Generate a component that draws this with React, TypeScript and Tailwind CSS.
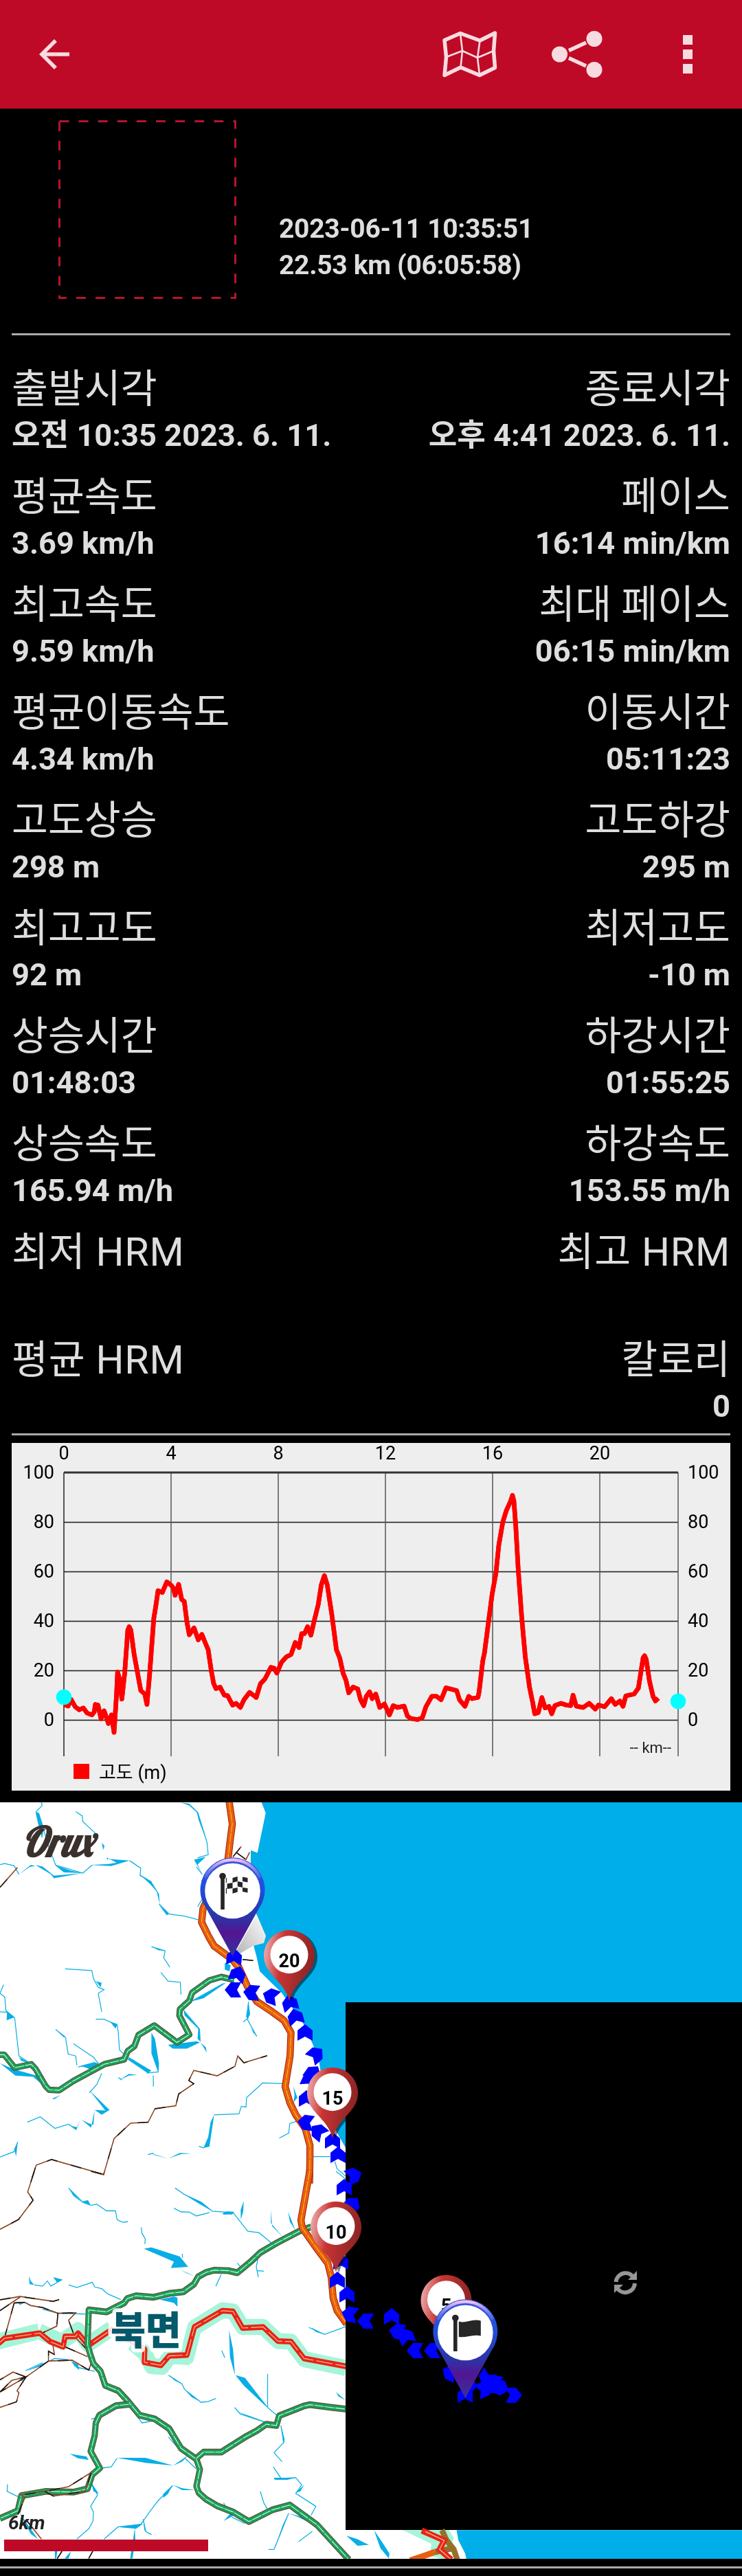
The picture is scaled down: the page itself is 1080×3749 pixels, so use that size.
interface Stat {
    label: string;
    value: string;
}

const rows: [Stat, Stat][] = [
    [{ label: '출발시각', value: '오전 10:35 2023. 6. 11.' }, { label: '종료시각', value: '오후 4:41 2023. 6. 11.' }],
    [{ label: '평균속도', value: '3.69 km/h' }, { label: '페이스', value: '16:14 min/km' }],
    [{ label: '최고속도', value: '9.59 km/h' }, { label: '최대 페이스', value: '06:15 min/km' }],
    [{ label: '평균이동속도', value: '4.34 km/h' }, { label: '이동시간', value: '05:11:23' }],
    [{ label: '고도상승', value: '298 m' }, { label: '고도하강', value: '295 m' }],
    [{ label: '최고고도', value: '92 m' }, { label: '최저고도', value: '-10 m' }],
    [{ label: '상승시간', value: '01:48:03' }, { label: '하강시간', value: '01:55:25' }],
    [{ label: '상승속도', value: '165.94 m/h' }, { label: '하강속도', value: '153.55 m/h' }],
    [{ label: '최저 HRM', value: '' }, { label: '최고 HRM', value: '' }],
    [{ label: '평균 HRM', value: '' }, { label: '칼로리', value: '0' }],
];

const Header = () => (
    <header className="h-[158px] bg-[#be0a26] flex items-center justify-between pl-[46px] pr-[72px] text-[#f8dbe0]">
        <svg width="66" height="66" viewBox="0 0 24 24" fill="currentColor"><path d="M20 11H7.83l5.59-5.59L12 4l-8 8 8 8 1.41-1.41L7.83 13H20v-2z" /></svg>
        <div className="flex items-center">
            <svg width="80" height="70" viewBox="15 13 80 70" fill="none" stroke="currentColor" strokeLinejoin="round">
                <path d="M18 27.500L41 17.500 69.500 28 91.500 17 89.500 43 91.500 67.500 69 78.500 41.500 67 18 78.500 20.500 52Z" strokeWidth="5.500" />
                <path d="M41 18L44 43 41.500 67M69.500 28L66 53 69 78M20.500 52L44 43 66 53 89.500 43" strokeWidth="2.600" />
            </svg>
            <svg width="74" height="68" viewBox="0 0 74 68" fill="currentColor" className="ml-[79px]">
                <circle cx="11.500" cy="34" r="11.500" />
                <circle cx="62" cy="11.500" r="11.500" />
                <circle cx="62" cy="56.500" r="11.500" />
                <path d="M25 28.500L50 17M25 39.500L50 51" stroke="currentColor" strokeWidth="5.500" />
            </svg>
            <div className="flex flex-col gap-[7px] ml-[117px]">
                <div className="size-[14px] bg-current" />
                <div className="size-[14px] bg-current" />
                <div className="size-[14px] bg-current" />
            </div>
        </div>
    </header>
);

const elevation =
    'M270 1185L288 1192 300 1163 318 1195 335 1208 352 1200 368 1222 388 1230 398 1218 403 1185 414 1187 427 1247 440 1212 458 1267 471 1230 482 1305 492 1150 497 1045 505 1075 515 1162 527 1050 540 865 546 850 553 865 567 970 595 1125 612 1140 621 1185 632 1060 650 815 658 765 668 695 686 703 705 657 724 672 733 685 740 715 755 668 768 733 779 742 790 830 800 885 820 855 838 907 853 883 867 918 880 950 893 1040 903 1095 913 1117 930 1110 948 1145 962 1147 983 1188 998 1180 1016 1198 1032 1163 1055 1133 1083 1155 1101 1095 1120 1075 1145 1025 1158 1028 1170 1050 1190 1003 1210 980 1230 970 1248 918 1264 940 1275 880 1287 880 1300 850 1314 887 1328 825 1345 755 1358 670 1371 630 1383 670 1402 795 1422 950 1436 985 1450 1050 1462 1080 1474 1135 1492 1110 1512 1118 1524 1165 1537 1190 1548 1150 1562 1130 1573 1160 1588 1140 1605 1198 1625 1183 1646 1230 1662 1190 1680 1198 1708 1192 1722 1235 1735 1245 1765 1250 1785 1242 1800 1195 1825 1150 1845 1150 1864 1165 1885 1113 1930 1125 1942 1165 1965 1193 1981 1150 1995 1160 2020 1155 2025 1130 2040 1000 2048 960 2062 850 2080 710 2096 620 2108 500 2125 400 2140 350 2158 310 2166 285 2172 310 2180 420 2190 600 2205 810 2220 980 2238 1110 2252 1180 2260 1225 2275 1220 2290 1155 2304 1200 2320 1193 2332 1225 2345 1190 2370 1180 2395 1188 2412 1190 2422 1145 2435 1192 2465 1198 2490 1180 2516 1205 2530 1187 2555 1195 2584 1160 2600 1185 2620 1170 2633 1193 2645 1148 2680 1140 2698 1115 2708 1050 2718 985 2724 975 2731 990 2745 1085 2760 1150 2770 1170 2782 1158';

const Chart = () => (
    <svg className="block mt-[11px] ml-[17px]" width="1046" height="506" fontFamily='Roboto, "Noto Sans CJK KR", sans-serif' fontSize="27">
        <rect width="1046" height="506" fill="#eee" />
        <path d={elevation} transform="translate(-17 -20) scale(.34439 .33807)" fill="none" stroke="red" strokeWidth="19" strokeLinejoin="round" />
        <g stroke="#222" strokeWidth="1.500">
            <path d="M76 115.500H970M76 187.500H970M76 259.500H970M76 331.500H970M76 403.500H970" opacity=".2" />
        </g>
        <g stroke="#222" strokeWidth="1.500" className="mix-blend-darken">
            <path d="M76 115.500H970M76 187.500H970M76 259.500H970M76 331.500H970M76 403.500H970" />
            <path d="M232 43V456M388 43V456M544 43V456M700 43V456M856 43V456M970 43V456" stroke="#555" />
            <path d="M76 43V456" />
            <path d="M76 43H970" strokeWidth="3" stroke="#333" />
        </g>
        <path d={elevation} transform="translate(-17 -20) scale(.34439 .33807)" fill="none" stroke="red" strokeWidth="19" strokeLinejoin="round" />
        {[0, 4, 8, 12, 16, 20].map((km, i) => (
            <text key={km} x={76 + i * 156} y="24" textAnchor="middle">{km}</text>
        ))}
        {[100, 80, 60, 40, 20, 0].map((m, i) => (
            <g key={m}>
                <text x="62" y={52 + i * 72} textAnchor="end">{m}</text>
                <text x="984" y={52 + i * 72}>{m}</text>
            </g>
        ))}
        <text x="960" y="451" textAnchor="end" fontSize="22" fill="#222">-- km--</text>
        <rect x="90" y="467" width="23" height="22" fill="red" />
        <text x="127" y="489">고도 (m)</text>
        <circle cx="76" cy="370" r="11.300" fill="cyan" />
        <circle cx="970" cy="376" r="11.300" fill="cyan" />
    </svg>
);

const Road = ({ d, kind }: { d: string; kind: 'green' | 'orange' | 'red' }) => {
    const style = {
        green: { edge: '#6b4636', fill: '#16a05a', mid: '#d9fbe6', w: 20 },
        orange: { edge: '#a3240f', fill: '#e85d0f', mid: '#ffc21a', w: 24 },
        red: { edge: '#e8231a', fill: '#e8231a', mid: '#fbd28c', w: 16 },
    }[kind];
    return (
        <g fill="none" strokeLinejoin="round">
            <path d={d} stroke={style.edge} strokeWidth={style.w + 6} />
            <path d={d} stroke={style.fill} strokeWidth={style.w} />
            <path d={d} stroke={style.mid} strokeWidth="3" strokeDasharray={kind === 'red' ? '70 12' : '40 4'} />
        </g>
    );
};

const Track = ({ d }: { d: string }) => (
    <g fill="none">
        <path d={d} stroke="#8a4422" strokeWidth="4.500" />
        <path d={d} stroke="#1c120c" strokeWidth="4" strokeDasharray="45 60" />
    </g>
);

// x, y, heading
const arrows: [number, number, number][] = [
    [341, 225, 5], [346, 250, 18], [339, 273, -90], [366, 277, -85], [394, 282, -70], [422, 292, -15], [430, 312, -15],
    [444, 335, 0], [460, 367, 48], [456, 394, 35], [451, 404, 25], [446, 431, 0], [445, 466, -82], [463, 479, -50],
    [484, 492, 0], [492, 513, 0], [515, 543, 70], [501, 560, 0], [513, 585, 40], [496, 668, 0], [491, 695, 0],
    [505, 716, 0], [509, 745, -78], [532, 755, -90], [570, 748, 0], [578, 770, -80], [591, 777, -22], [604, 798, -90],
    [629, 798, -90], [655, 830, -65], [677, 862, 0], [683, 849, 90], [708, 838, -150], [705, 854, 65], [719, 845, -80],
    [724, 849, 90], [729, 852, 110], [748, 863, 90],
];

const KmPin = ({ x, y, km }: { x: number; y: number; km: number }) => (
    <g transform={`translate(${x} ${y})`}>
        <path d="M0 0C-5 -24 -29 -36 -35 -54A37 37 0 1 1 35 -54C29 -36 5 -24 0 0Z" fill="#000" opacity=".5" transform="translate(4 2)" />
        <path d="M0 0C-5 -24 -29 -36 -35 -54A37 37 0 1 1 35 -54C29 -36 5 -24 0 0Z" fill="url(#redPin)" />
        <circle cy="-67.300" r="27.500" fill="#fff" />
        <text y="-49" textAnchor="middle" fontFamily="Roboto, sans-serif" fontWeight="700" fontSize="27">{km}</text>
    </g>
);

const FlagPin = ({ x, y, finish = false }: { x: number; y: number; finish?: boolean }) => (
    <g transform={`translate(${x} ${y})`}>
        <path d="M0 0L-38 -69A47 47 0 1 1 38 -69Z" fill="url(#bluePin)" />
        <path d="M-39 -116A43.500 43.500 0 0 1 39 -116" fill="none" stroke="url(#pinShine)" strokeWidth="4.500" strokeLinecap="round" />
        <circle cy="-95" r="40.300" fill="#fff" />
        <g fill="#262626">
            <circle cx="-14.500" cy="-116.500" r="4.800" />
            <rect x="-17.300" y="-116" width="5.600" height="48" />
            {finish ? (
                <path d="M-9.700 -114h1.200v7h-1.200zM-9.700 -99h1.200v8h-1.200zM-8 -105.500L0 -107V-99L-8 -98zM0 -114L7.300 -116V-109L0 -107zM0 -98.500L7.300 -100V-93.500L0 -91.300zM7.300 -109L14.500 -107.500V-100L7.300 -101.500zM14.500 -115.500L22 -114V-107.500L14.500 -109zM14.500 -100L22 -99V-92.500L14.500 -94z" />
            ) : (
                <path d="M-9.500 -111.500C0 -108 10 -116 22.500 -112.500V-90.500C12 -93.500 2 -87.500 -9.500 -89Z" />
            )}
        </g>
    </g>
);

const RouteMap = () => (
    <svg className="block mt-[17px]" width="1080" height="1101" viewBox="0 0 1080 1101">
        <defs>
            <linearGradient id="redPin" x1="0" y1=".3" x2="1" y2=".5">
                <stop offset="0" stopColor="#eba9a9" />
                <stop offset=".35" stopColor="#c93434" />
                <stop offset=".75" stopColor="#9e2a2a" />
                <stop offset="1" stopColor="#8f2222" />
            </linearGradient>
            <linearGradient id="bluePin" x1="0" y1="0" x2="0" y2="1">
                <stop offset="0" stopColor="#3f55d8" />
                <stop offset=".3" stopColor="#1f4fe0" />
                <stop offset=".6" stopColor="#2a35a8" />
                <stop offset=".76" stopColor="#531592" />
                <stop offset="1" stopColor="#34339c" />
            </linearGradient>
            <linearGradient id="pinShine" x1="0" y1="0" x2="0" y2="1">
                <stop offset="0" stopColor="#efc0f6" />
                <stop offset="1" stopColor="#7f8cf0" stopOpacity=".4" />
            </linearGradient>
            <linearGradient id="pinShade" x1="0" y1="1" x2="1" y2="0">
                <stop offset="0" stopColor="#b5b5b5" />
                <stop offset="1" stopColor="#fff" />
            </linearGradient>
        </defs>
        <rect width="1080" height="1101" fill="#fff" />

        {/* north half */}
        <g transform="translate(0 -13) scale(.34439 .35714)">
            <path d="M1105 36L1123 80 1088 242 1060 232 1058 440 1085 495 1123 580 1115 610 1072 620 1083 660 1098 725 1150 775 1190 812 1240 880 1290 950 1325 1030 1350 1100 1362 1180 1380 1300 1420 1375 1461 1445 1600 1445 3140 1000V36Z" fill="#00aeea" />
            <path d="M1085 495L1123 580 1115 610 1072 620 1010 655 1000 640Z" fill="url(#pinShade)" />
            <g fill="#09aee6">
                <path d="M150 75L165 80 185 140 178 185 160 120ZM80 330L130 292 150 295 125 300ZM150 292L180 298 228 335 350 325 228 346 215 330ZM232 292L300 315 350 325 270 322ZM452 262L470 268 548 274 500 286ZM380 292L460 288 548 274 470 296ZM590 330L640 360 672 410 675 450 662 400 635 370ZM765 38L800 42 835 75 875 200 840 110 832 78 800 50ZM672 455L715 490 705 497ZM640 622L660 630 698 640 670 640ZM465 930L497 940 488 958ZM30 890L62 912 28 925ZM405 765L430 772 425 790ZM640 975L655 1000 672 1100 670 1140 640 1060ZM545 1075L640 1130 625 1140 540 1085ZM710 1025L830 1010 845 1015 790 1040 730 1040ZM775 880L845 960 848 1012 835 1000 838 960 780 905ZM800 850L940 775 955 772 860 835ZM848 1015L870 1035 874 1056ZM950 690L975 700 970 725 950 718ZM1050 845L1057 900 1048 918 1040 910ZM1060 955L1088 992 1070 975ZM820 270L870 258 835 290 855 330ZM430 200L442 215 436 230ZM378 1210L463 1290 430 1310 400 1290 445 1292ZM345 1330L385 1362 400 1290 395 1350 375 1345ZM300 1355L322 1373 340 1330 325 1360ZM115 1340L75 1420 68 1480 60 1450 90 1390ZM890 1340L905 1310 885 1440 860 1445 880 1400ZM640 1468L712 1488 655 1475ZM712 1488L760 1465 808 1468 765 1470ZM0 1100L60 1125 155 1150 170 1180 140 1155 65 1150ZM340 1110L400 1095 420 1105 430 1120 300 1185 400 1130ZM235 962L275 990 270 995ZM505 1168L545 1143 580 1147 545 1150ZM220 1244L255 1230 230 1246ZM1240 1195L1257 1240 1240 1260 1245 1230ZM80 1075L110 1090 140 1105 90 1090ZM410 1290L455 1294 430 1310Z" />
            </g>
            <g fill="none" stroke="#09aee6" strokeWidth="3.500">
                <path d="M175 36L178 50 152 75M185 150L205 215 235 292 350 325 390 292M0 290L20 286 60 295 80 330M320 74L348 92 350 115 400 160 412 182M452 262L456 270M548 274L595 305 592 335 640 360M672 450L715 492 780 500 838 515M835 75L875 200 880 250 835 262M830 300L855 330M855 430L835 462M275 715L388 722 395 755 415 790 440 800 415 815 430 890M640 625L698 642 692 670 718 708M680 730L710 765 762 770 765 820M405 920L440 920 495 945 500 975 505 1045 520 1060M15 780L0 815 20 830 25 885 62 915 80 1070 120 1095M0 890L30 892M235 962L277 995 288 1062 320 1070 325 1108M310 1020L395 1075 415 1100 330 1115M430 1140L410 1185 378 1220M0 1482L60 1460 75 1420M115 1340L170 1318 232 1365 290 1348 322 1370M648 1150V1195M1050 850L1045 920 1085 990M1050 915L1028 932M905 1310L1010 1306 1020 1275 1040 1278 1042 1240 1110 1180 1195 1183M1257 1335L1225 1345 1220 1385 1180 1405M1320 1480H1395M1415 1500L1425 1530 1461 1560M840 1438L862 1445M625 1472L650 1466M500 1158L515 1168M620 1140L668 1135M560 1085L620 1135" />
            </g>
            <Track d="M0 383L73 303" />
            <Track d="M135 1568L153 1515 218 1492 438 1553 482 1407 552 1344 626 1340 655 1285 743 1273 755 1225 819 1183 798 1170 819 1129 918 1151 993 1112 1005 1070 1031 1098 1129 1069" />
            <Track d="M985 258L1020 216M1000 242L1040 270 1055 240M1025 677L1070 681" />
            <Road kind="orange" d="M968 30L982 125 975 175 962 280 900 380 858 470 852 525 880 580 905 622 980 675 1010 710 1045 785 1085 848 1150 890 1200 925 1230 975 1226 1070 1205 1195 1225 1260 1250 1310 1290 1365 1310 1435 1310 1480 1308 1590" />
            <Road kind="green" d="M0 1065L18 1065 62 1118 132 1104 150 1122 192 1192 208 1208 250 1210 310 1172 440 1104 525 1084 540 1050 568 1030 585 985 652 946 748 1015 800 983 758 905 760 880 800 845 812 812 885 762 935 748 990 760" />
        </g>

        {/* south half */}
        <g transform="translate(0 537) scale(.34439 .37564)">
            <g fill="#09aee6">
                <path d="M608 300L640 295 760 330 795 370 722 375 735 350ZM788 95L850 118 898 155 840 125ZM940 163L960 155 990 157 982 167 945 168ZM1030 115L1028 155 1018 188 1017 150ZM1145 150L1145 200 1195 255 1150 212ZM1218 157L1248 228 1225 195ZM345 118L372 112 382 130ZM122 405L130 425 145 440 125 437ZM225 410L265 420 240 430ZM675 497L735 485 750 490V525L735 510ZM760 380L825 408 790 395ZM968 615L985 690 993 790 972 720ZM995 790L1035 800 1135 918 1125 912 1030 830ZM1000 930L1120 970 1060 955ZM1187 980L1203 1040 1197 1055ZM295 1095L365 1105 375 1118 330 1112ZM495 1110L615 1110 732 1140 620 1130ZM732 1140L795 1100 770 1125ZM108 775L205 735 175 755ZM300 735L330 748 335 770 315 755ZM945 1355L980 1320 985 1335ZM1220 1325L1160 1465 1195 1370ZM1220 1325L1280 1340 1350 1380 1260 1340ZM1465 1412L1510 1425 1555 1447 1510 1450ZM498 1378L605 1365 575 1385ZM605 1345L618 1395 610 1390ZM730 1215L770 1228 825 1235 770 1235ZM690 1250L730 1215 710 1250 690 1265ZM1158 1187L1250 1187 1215 1195 1165 1195ZM1250 1245L1285 1215 1270 1240ZM1315 605L1372 632 1335 622ZM1420 855L1461 888 1430 872ZM712 790L770 822 740 812ZM780 845L845 892 810 875ZM570 1380L572 1430 560 1500H550L562 1430ZM300 1472L290 1500H273ZM232 1472H242L238 1500H232ZM80 1320L160 1425 130 1405ZM385 1205L418 1250 395 1240ZM630 750L645 775 632 768ZM70 505L105 508 85 518ZM290 65L345 120 310 95Z" />
            </g>
            <g fill="none" stroke="#09aee6" strokeWidth="3.500">
                <path d="M290 65L350 120 385 132 408 127 450 153 488 153 495 188 520 198 540 195M597 217L600 240 614 262 612 282M740 65L780 90 850 120 898 155 985 160 1047 232 1095 238 1148 278M735 143L765 157 800 158 830 173 885 160M145 440L180 445 200 425 215 445 262 420M290 440L325 450 390 430 400 448 430 455 455 475 510 497M180 535L245 550 360 553M935 400L912 445M1003 355L1020 375M1090 340L1083 370 1092 410M1088 385L1115 387M770 320L772 335M937 695L950 722M712 790L770 825 780 845 850 895 880 892 912 880M1131 785V915L1170 945M992 915L1015 940 1120 972M1187 985L1200 1050 1158 1090 1192 1125M1155 1145L1188 1190 1158 1192 1250 1187 1275 1215 1250 1248 1335 1298 1315 1332M1100 1240L1115 1285 1130 1308M385 960L410 955M580 950L600 975 655 965M430 1150L470 1145 495 1112M780 1110L828 1152M712 1030L760 1080M385 1205L412 1255 383 1298 395 1320 393 1355 375 1385 325 1425M440 1425L498 1378 595 1368 632 1320 665 1280 730 1218M32 1213L30 1240 75 1260M605 1348L615 1395 640 1408M1305 605L1372 632 1461 602M1135 1465H1158L1220 1325M1262 1435L1320 1395M210 735L230 725 290 730M330 760L400 775M1420 0L1461 30M60 510L105 508 130 520M945 1285L960 1310M980 1340L1035 1365M108 772L180 742M80 800L100 815" />
            </g>
            <g fill="none" stroke="#a6f5d8" strokeWidth="62">
                <path d="M-10 660L165 620M165 620L262 660 330 615 372 670 470 610M560 665L612 705 640 755 685 758 720 715 790 720 822 605 940 538 985 543 1025 603 1112 603 1175 658 1230 660 1285 728 1461 762" strokeLinejoin="round" />
            </g>
            <Track d="M145 0L117 80 140 112 78 187 0 225M385 0L438 13 442 0" />
            <Track d="M0 498L85 485 225 504 250 497M0 540L85 487M60 510L22 635M60 510L105 508 130 520 180 528 245 550 320 548 290 577 315 640 372 695 385 745 375 770 305 732 205 735 205 697 230 710 222 665M205 735L110 797 0 855M110 797L55 778 0 808M110 797L72 850 80 858 70 893 0 915M245 548L240 600 175 628M275 680L370 718M0 855L50 810 105 798" />
            <Road kind="red" d="M-10 670L20 647 168 627 212 660 267 680 275 640 318 640 330 627 373 675 472 613 540 650 612 690 610 740 680 752 715 715 790 712 822 603 940 540 985 543 1025 607 1112 603 1175 658 1230 660 1285 725 1470 757" />
            <Road kind="green" d="M1315 215L1265 232 1165 280 1100 315 1060 350 1003 393 965 385 905 383 870 392 838 408 820 437 775 467 715 473 650 488 575 482 538 493 525 510 450 545 375 537 370 670 380 705 395 745 425 775 445 830 500 850 540 890 590 945 655 960 715 997 765 1073 830 1115 845 1155 830 1220 840 1245 870 1270 920 1297 985 1320 1052 1357 1150 1312 1225 1293 1340 1370 1475 1505" />
            <Road kind="green" d="M545 903L490 908 420 945 405 975 400 1025 383 1085 422 1150 390 1175 370 1230 310 1243 195 1240 90 1257 75 1315 0 1345" />
            <Road kind="green" d="M830 1112L860 1088 935 1088 1035 1030 1085 1005 1125 980 1168 985 1180 947 1282 910 1310 904 1400 915 1470 922" />
            <Track d="M75 1330L105 1265 90 1255 190 1240 290 1222 380 1170M190 1240L225 1258 360 1240 385 1170M110 1350L175 1425M262 1472L242 1500M392 1472L375 1500" />
            <Road kind="orange" d="M1310 -5L1272 190 1278 220 1340 300 1385 355 1400 410 1408 490 1425 540 1465 590" />
        </g>
        <rect x="503" y="291" width="577" height="768" fill="#000" />

        {/* strip under the missing tile */}
        <g transform="translate(440 537) scale(.34439 .37564)">
            <path d="M652 1390L660 1430 688 1480 694 1505H1900V1390Z" fill="#00aeea" />
            <path d="M425 1390H620L640 1420 625 1465 600 1505 540 1490 545 1443Z" fill="#a6f5d8" />
            <path d="M188 1412L282 1447 235 1450ZM303 1390L340 1440 368 1480 366 1500 330 1460Z" fill="#09aee6" />
            <g fill="none" strokeWidth="24">
                <path d="M590 1390L610 1430 640 1465 655 1505M640 1460L560 1475" stroke="#96702a" />
                <path d="M455 1508L520 1488 560 1475" stroke="#e85d0f" />
                <path d="M505 1392L600 1430 580 1465 630 1505" stroke="#e8231a" />
            </g>
            <path d="M520 1396L600 1430 580 1465 630 1505" stroke="#fbd28c" strokeWidth="3" fill="none" />
        </g>

        <g fill="#00f">
            {arrows.map(([x, y, r]) => (
                <path key={`${x}-${y}`} d="M0 -12L11 -3V12L0 6 -11 12V-3Z" transform={`translate(${x} ${y}) rotate(${r})`} />
            ))}
        </g>

        <text x="161" y="789" fontFamily='"Noto Sans CJK KR", sans-serif' fontWeight="900" fontSize="57" textLength="103" fill="#04596b" stroke="#fff" strokeOpacity=".88" strokeWidth="11" strokeLinejoin="round" paintOrder="stroke">북면</text>

        <KmPin x={421} y={289} km={20} />
        <KmPin x={484} y={489} km={15} />
        <KmPin x={489} y={684} km={10} />
        <KmPin x={649.500} y={791} km={5} />
        <FlagPin x={338.500} y={224} finish />
        <FlagPin x={677.300} y={867} />

        {/* tile loading */}
        <g fill="none" stroke="#969696" strokeWidth="6">
            <path d="M896.500 698A14 14 0 0 1 921 690" />
            <path d="M924 700A14 14 0 0 1 899 708" />
            <path d="M927 682V695H914ZM894 714V702H907Z" fill="#969696" stroke="none" />
        </g>

        <text x="32" y="79" fontFamily='Lobster, "Liberation Serif", serif' fontStyle="italic" fontWeight="700" fontSize="60" textLength="104" lengthAdjust="spacingAndGlyphs" fill="#3a302c">Orux</text>
        <text x="12" y="1058" fontFamily="Roboto, sans-serif" fontStyle="italic" fontWeight="700" fontSize="28" fill="#222">6km</text>
        <rect x="6" y="1073" width="297" height="17" fill="#be0a26" />
    </svg>
);

export default function App() {
    return (
        <div className="w-[1080px] h-[3749px] bg-black text-[#dedede] overflow-hidden font-[Roboto,'Noto_Sans_CJK_KR',sans-serif]">
            <Header />
            <section className="h-[327px] flex pt-[17px] pl-[85px]">
                <svg width="259" height="260" fill="none"><rect x="1.500" y="1.500" width="256" height="257" stroke="#b5152c" strokeWidth="3" strokeDasharray="14 14.100" /></svg>
                <div className="pt-[132px] pl-[62px] text-[39px] leading-[53px] tracking-[-0.3px] font-bold whitespace-pre">
                    <p>2023-06-11 10:35:51</p>
                    <p>22.53 km (06:05:58)</p>
                </div>
            </section>
            <div className="h-[3px] mx-[17px] bg-[#aaa]" />
            <section className="h-[1598px] pt-[35px] px-[17px]">
                {rows.map(([left, right]) => (
                    <div key={left.label} className="h-[157px] flex justify-between">
                        {[left, right].map((s) => (
                            <div key={s.label} className="last:text-right whitespace-pre">
                                <p className={`pt-px text-[57.5px] leading-[85px] ${s.label.includes('HRM') ? 'tracking-[0.8px]' : ''}`}>{s.label}</p>
                                <p className="text-[45.2px] leading-[50px] font-bold">{s.value}</p>
                            </div>
                        ))}
                    </div>
                ))}
            </section>
            <div className="h-[3px] mx-[17px] bg-[#aaa]" />
            <Chart />
            <RouteMap />
            <div className="mt-[11px] h-[3px] bg-[#aaa]" />
        </div>
    );
}
